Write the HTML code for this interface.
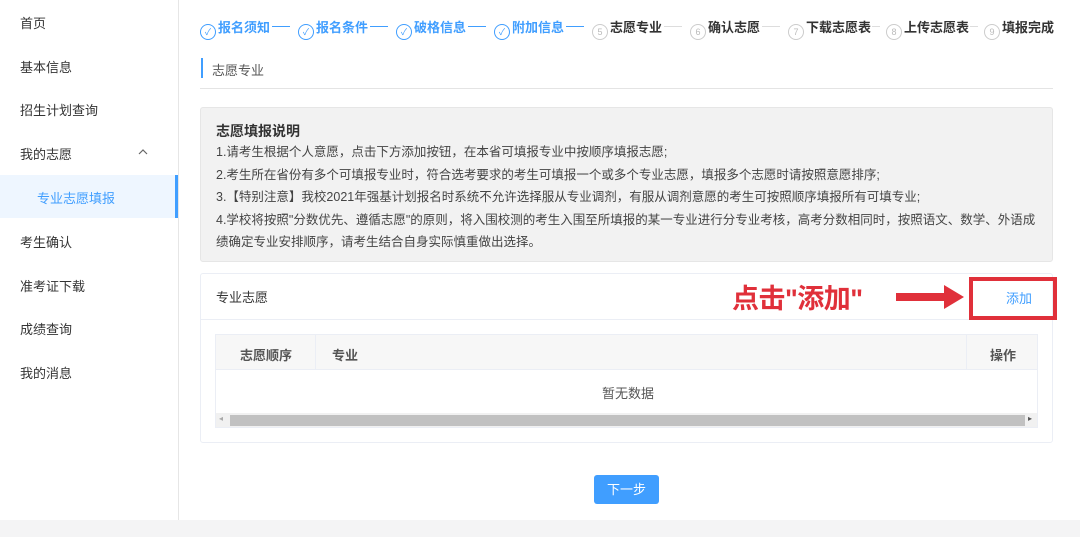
<!DOCTYPE html><html><head><meta charset="utf-8"><style>
*{margin:0;padding:0;box-sizing:border-box}
body{width:1080px;height:537px;overflow:hidden;background:#fff;font-family:"Liberation Sans","Noto Sans CJK SC",sans-serif;color:#333;position:relative}
.a{position:absolute}
.side{left:0;top:0;width:179px;height:520px;border-right:1px solid #e6e6e6}
.mi{position:absolute;left:20px;font-size:13px;color:#333}
.act{left:0;top:175px;width:178px;height:43px;background:#eef6ff;border-right:3px solid #409eff}
.st{position:absolute;top:17px;font-size:13px;font-weight:bold;white-space:nowrap}
.c{display:inline-block;width:16px;height:16px;border-radius:50%;border:1px solid #409eff;font-size:9px;text-align:center;line-height:14px;vertical-align:-3px;margin-right:2px;font-weight:normal}
.g .c{border-color:#ccc;color:#bbb}
.b{color:#409eff}.g{color:#333}
.ln{position:absolute;top:26px;height:1px;background:#409eff}
.lg{background:#ddd}
.info p{font-size:12.5px;color:#444;line-height:22.5px}
</style></head><body>
<div class="a side"></div>
<div class="a act"></div>
<div class="mi" style="top:13px">首页</div>
<div class="mi" style="top:57px">基本信息</div>
<div class="mi" style="top:100px">招生计划查询</div>
<div class="mi" style="top:144px">我的志愿</div>
<svg class="a" style="left:138px;top:149px" width="10" height="6" viewBox="0 0 10 6"><path d="M1 5L5 1L9 5" fill="none" stroke="#666" stroke-width="1.2"/></svg>
<div class="mi" style="left:37px;top:188px;color:#409eff">专业志愿填报</div>
<div class="mi" style="top:232px">考生确认</div>
<div class="mi" style="top:276px">准考证下载</div>
<div class="mi" style="top:319px">成绩查询</div>
<div class="mi" style="top:363px">我的消息</div>
<div class="a" style="left:0;top:520px;width:1080px;height:17px;background:#f4f4f5"></div>

<span class="st b" style="left:200px"><span class="c">✓</span>报名须知</span>
<span class="ln" style="left:272px;width:18px"></span>
<span class="st b" style="left:298px"><span class="c">✓</span>报名条件</span>
<span class="ln" style="left:370px;width:18px"></span>
<span class="st b" style="left:396px"><span class="c">✓</span>破格信息</span>
<span class="ln" style="left:468px;width:18px"></span>
<span class="st b" style="left:494px"><span class="c">✓</span>附加信息</span>
<span class="ln" style="left:566px;width:18px"></span>
<span class="st g" style="left:592px"><span class="c">5</span>志愿专业</span>
<span class="ln lg" style="left:664px;width:18px"></span>
<span class="st g" style="left:690px"><span class="c">6</span>确认志愿</span>
<span class="ln lg" style="left:762px;width:18px"></span>
<span class="st g" style="left:788px"><span class="c">7</span>下载志愿表</span>
<span class="ln lg" style="left:872px;width:8px"></span>
<span class="st g" style="left:886px"><span class="c">8</span>上传志愿表</span>
<span class="ln lg" style="left:970px;width:8px"></span>
<span class="st g" style="left:984px"><span class="c">9</span>填报完成</span>

<div class="a" style="left:201px;top:58px;width:2px;height:20px;background:#409eff"></div>
<div class="a" style="left:212px;top:60px;font-size:13px;color:#555">志愿专业</div>
<div class="a" style="left:200px;top:88px;width:853px;height:1px;background:#e4e4e4"></div>

<div class="a info" style="left:200px;top:107px;width:853px;height:155px;background:#f2f2f2;border:1px solid #e6e6e6;border-radius:3px;padding:13px 15px">
<div style="font-size:14px;font-weight:bold;color:#333;line-height:20px">志愿填报说明</div>
<p>1.请考生根据个人意愿，点击下方添加按钮，在本省可填报专业中按顺序填报志愿;</p>
<p>2.考生所在省份有多个可填报专业时，符合选考要求的考生可填报一个或多个专业志愿，填报多个志愿时请按照意愿排序;</p>
<p>3.【特别注意】我校2021年强基计划报名时系统不允许选择服从专业调剂，有服从调剂意愿的考生可按照顺序填报所有可填专业;</p>
<p>4.学校将按照"分数优先、遵循志愿"的原则，将入围校测的考生入围至所填报的某一专业进行分专业考核，高考分数相同时，按照语文、数学、外语成绩确定专业安排顺序，请考生结合自身实际慎重做出选择。</p>
</div>

<div class="a" style="left:200px;top:273px;width:853px;height:170px;border:1px solid #ebeef5;border-radius:3px"></div>
<div class="a" style="left:201px;top:319px;width:851px;height:1px;background:#ebeef5"></div>
<div class="a" style="left:216px;top:287px;font-size:13px;color:#333">专业志愿</div>
<div class="a" style="left:732px;top:277px;font-size:27px;font-weight:bold;color:#e0303a;letter-spacing:-0.5px">点击"添加"</div>
<div class="a" style="left:896px;top:293px;width:50px;height:8px;background:#e0303a"></div>
<div class="a" style="left:944px;top:285px;width:0;height:0;border-left:20px solid #e0303a;border-top:12px solid transparent;border-bottom:12px solid transparent"></div>
<div class="a" style="left:969px;top:277px;width:88px;height:43px;border:4px solid #e0303a"></div>
<div class="a" style="left:1006px;top:288px;font-size:13px;color:#409eff">添加</div>

<div class="a" style="left:215px;top:334px;width:823px;height:94px;border:1px solid #ebeef5"></div>
<div class="a" style="left:216px;top:335px;width:821px;height:35px;background:#f7f7f7;border-bottom:1px solid #ebeef5"></div>
<div class="a" style="left:315px;top:335px;width:1px;height:35px;background:#ebeef5"></div>
<div class="a" style="left:966px;top:335px;width:1px;height:35px;background:#ebeef5"></div>
<div class="a" style="left:240px;top:345px;font-size:13px;font-weight:bold;color:#555">志愿顺序</div>
<div class="a" style="left:332px;top:345px;font-size:13px;font-weight:bold;color:#555">专业</div>
<div class="a" style="left:990px;top:345px;font-size:13px;font-weight:bold;color:#555">操作</div>
<div class="a" style="left:602px;top:383px;font-size:13px;color:#555">暂无数据</div>
<div class="a" style="left:216px;top:413px;width:821px;height:14px;background:#f1f1f1"></div>
<div class="a" style="left:230px;top:415px;width:795px;height:11px;background:#c1c1c1"></div>
<div class="a" style="left:219px;top:414px;font-size:8px;color:#aaa">◂</div>
<div class="a" style="left:1028px;top:414px;font-size:8px;color:#555">▸</div>

<div class="a" style="left:594px;top:475px;width:65px;height:29px;background:#409eff;border-radius:3px;color:#fff;font-size:13px;text-align:center;line-height:29px">下一步</div>
</body></html>
